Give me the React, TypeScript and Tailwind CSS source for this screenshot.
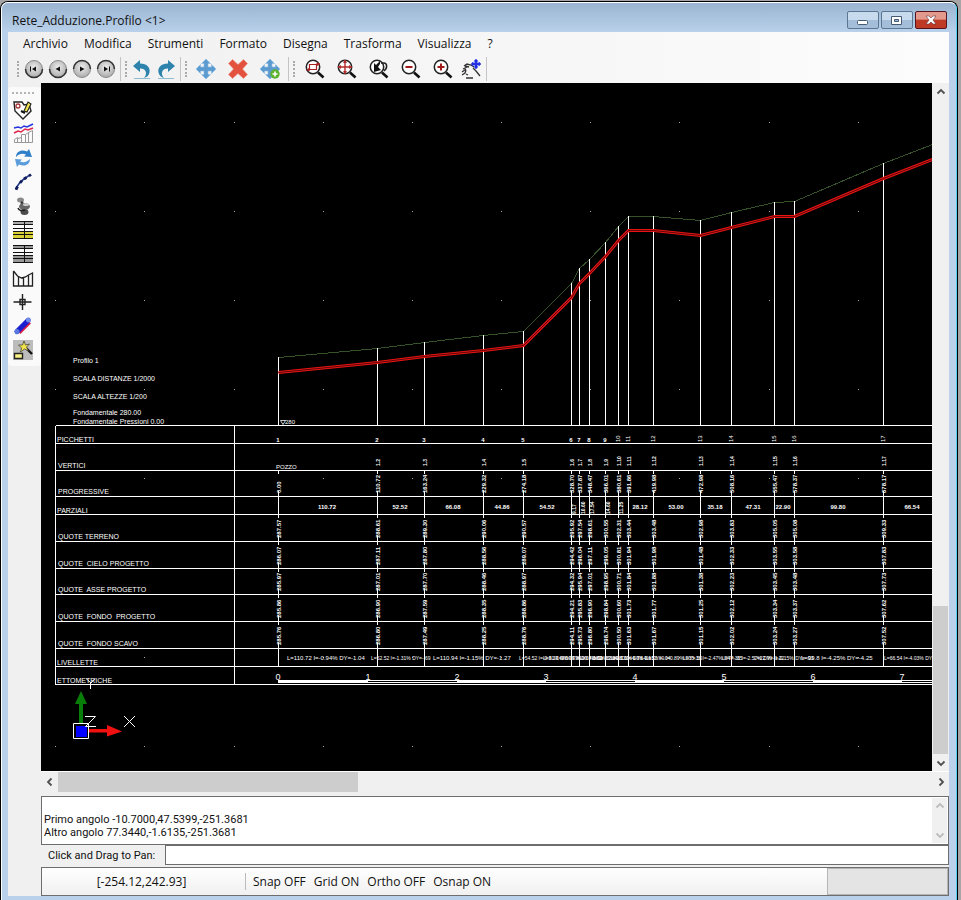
import type { ReactNode } from "react";

/* ---------- profile data ---------- */

type Station = {
  x: number;
  ground: number;
  pipe: number;
  prog: string;
  terreno: string;
  cielo: string;
  asse: string;
  fondo: string;
  scavo: string;
};

const raw: [number, number, number, string, string, string, string, string, string][] = [
  [278, 357, 372, "0.00", "287.57", "286.07", "285.97", "285.86", "285.76"],
  [377, 348, 362, "110.72", "288.61", "287.11", "287.01", "286.90", "286.80"],
  [424, 342, 356, "163.24", "289.30", "287.80", "287.70", "287.59", "287.49"],
  [483, 335, 350, "229.32", "290.06", "288.56", "288.46", "288.35", "288.25"],
  [523, 331, 345, "274.18", "290.57", "289.07", "288.97", "288.86", "288.76"],
  [571, 283, 297, "328.70", "295.92", "294.42", "294.32", "294.21", "294.11"],
  [579, 268, 283, "337.87", "297.54", "296.04", "295.94", "295.83", "295.73"],
  [589, 259, 273, "348.47", "298.61", "297.11", "297.01", "296.90", "296.80"],
  [605, 242, 256, "366.01", "300.55", "299.05", "298.95", "298.84", "298.74"],
  [618, 226, 240, "380.61", "302.31", "300.81", "300.71", "300.60", "300.50"],
  [628, 216, 230, "391.86", "303.44", "301.94", "301.84", "301.73", "301.63"],
  [653, 216, 230, "419.98", "303.48", "301.98", "301.88", "301.77", "301.67"],
  [700, 220, 235, "472.98", "302.98", "301.48", "301.38", "301.25", "301.15"],
  [731, 212, 227, "508.16", "303.83", "302.33", "302.23", "302.12", "302.02"],
  [774, 202, 216, "555.47", "305.05", "303.55", "303.45", "303.34", "303.24"],
  [794, 201, 216, "578.37", "305.08", "303.58", "303.48", "303.37", "303.27"],
  [883, 163, 178, "678.17", "309.33", "307.83", "307.73", "307.62", "307.52"],
];

const stations: Station[] = raw.map(([x, ground, pipe, prog, terreno, cielo, asse, fondo, scavo]) => ({
  x, ground, pipe, prog, terreno, cielo, asse, fondo, scavo,
}));

const bands = [
  { label: "PICCHETTI", x: 57, top: 425, bottom: 443 },
  { label: "VERTICI", x: 58, top: 443, bottom: 470 },
  { label: "PROGRESSIVE", x: 58, top: 470, bottom: 496 },
  { label: "PARZIALI", x: 57, top: 496, bottom: 514 },
  { label: "QUOTE TERRENO", x: 58, top: 514, bottom: 541 },
  { label: "QUOTE  CIELO PROGETTO", x: 58, top: 541, bottom: 568 },
  { label: "QUOTE  ASSE PROGETTO", x: 58, top: 568, bottom: 594 },
  { label: "QUOTE  FONDO  PROGETTO", x: 58, top: 594, bottom: 621 },
  { label: "QUOTE  FONDO SCAVO", x: 58, top: 621, bottom: 648 },
  { label: "LIVELLETTE", x: 57, top: 648, bottom: 666 },
  { label: "ETTOMETRICHE", x: 57, top: 666, bottom: 684 },
];

const valueBands: { key: keyof Station; top: number; bottom: number }[] = [
  { key: "prog", top: 470, bottom: 496 },
  { key: "terreno", top: 514, bottom: 541 },
  { key: "cielo", top: 541, bottom: 568 },
  { key: "asse", top: 568, bottom: 594 },
  { key: "fondo", top: 594, bottom: 621 },
  { key: "scavo", top: 621, bottom: 648 },
];

const partials: [number, string][] = [
  [327, "110.72"], [400, "52.52"], [453, "66.08"], [502, "44.86"], [547, "54.52"],
  [640, "28.12"], [676, "53.00"], [715, "35.18"], [753, "47.31"], [783, "22.90"],
  [838, "99.80"], [912, "66.54"],
];

const narrowPartials: [number, string][] = [
  [576, "9.17"], [585, "10.60"], [594, "17.54"], [610, "14.60"], [623, "11.25"],
];

const slopes: [number, number, string][] = [
  [287, 6, "L=110.72 I=-0.94% DY=-1.04"],
  [371, 5, "L=52.52 I=-1.31% DY=-.69"],
  [433, 6, "L=110.94 I=-1.15% DY=-1.27"],
  [519, 5, "L=54.52 I=-9.81% DY=-5.35"],
  [543, 5, "L=9.17 I=-17.7% DY=-1.62"],
  [556, 5, "L=28.14 I=-10.7% DY=-3.01"],
  [580, 5, "L=14.60 I=-12.1% DY=-1.76"],
  [592, 5, "L=11.25 I=-10.0% DY=-1.13"],
  [611, 5, "L=28.12 I=-0.14% DY=-.04"],
  [646, 5, "L=53.00 I=0.89% DY=.50"],
  [683, 5, "L=35.18 I=-2.47% DY=-.85"],
  [722, 5, "L=47.31 I=-2.57% DY=-1.22"],
  [754, 5, "L=22.90 I=-0.15% DY=-.03"],
  [801, 6, "L=99.8 I=-4.25% DY=-4.25"],
  [884, 5, "L=66.54 I=-4.03% DY=-2.68"],
];

const hectometres = [278, 368, 457, 546, 635, 724, 813, 902];
const gridX = [55, 144, 234, 323, 412, 501, 590, 679, 769, 858];
const gridY = [122, 211, 300, 389, 478, 568, 657, 746];

const notes: [number, string][] = [
  [363, "Profilo 1"],
  [381, "SCALA DISTANZE 1/2000"],
  [399, "SCALA ALTEZZE 1/200"],
  [415, "Fondamentale 280.00"],
  [424, "Fondamentale Pressioni 0.00"],
];

function Up({ x, y, size, bold, children }: { x: number; y: number; size: number; bold?: boolean; children: ReactNode }) {
  return (
    <text fontSize={size} fontWeight={bold ? "bold" : "normal"} transform={`translate(${x} ${y}) rotate(-90)`}>
      {children}
    </text>
  );
}

function Drawing() {
  const groundPts = [...stations.map((s) => `${s.x},${s.ground}`), "932,144", "1100,80"].join(" ");
  const pipePts = [...stations.map((s) => `${s.x},${s.pipe}`), "932,159", "1100,94"].join(" ");
  return (
    <svg role="img" aria-label="Profilo 1" className="min-w-0 flex-1 bg-black font-['Liberation_Sans',Arial,sans-serif]">
      <g transform="translate(-41 -83)" fill="#fff">
        {gridX.flatMap((x) => gridY.map((y) => <rect key={`${x}-${y}`} x={x} y={y} width="1" height="1" fill="#aaa" />))}

        <g fill="none">
          <polyline points={groundPts} stroke="#36522a" transform="translate(.5 .5)" shapeRendering="crispEdges" />
          <g stroke="#fff" transform="translate(.5 0)" shapeRendering="crispEdges">
            {stations.map((s) => <line key={s.x} x1={s.x} x2={s.x} y1={s.ground} y2="425" />)}
          </g>
          {/* pipe: two red walls around a dark core */}
          <polyline points={pipePts} stroke="#e81414" strokeWidth="3" transform="translate(.5 .5)" />
          <polyline points={pipePts} stroke="#5c0606" transform="translate(.5 .5)" />
        </g>

        {notes.map(([y, t]) => <text key={t} x="73" y={y} fontSize="7">{t}</text>)}
        <path d="M280.5 420.5h5l-2.5 4z" fill="none" stroke="#fff" strokeWidth=".8" />
        <text x="285" y="424" fontSize="6">280</text>

        <g stroke="#fff" shapeRendering="crispEdges" transform="translate(.5 .5)">
          {bands.map((b) => <line key={b.top} x1="55" x2="3000" y1={b.top} y2={b.top} />)}
          <line x1="55" x2="3000" y1="684" y2="684" />
          <line x1="55" x2="55" y1="425" y2="684" />
          <line x1="234" x2="234" y1="425" y2="684" />
          {stations.map((s) => (
            <g key={s.x}>
              <line x1={s.x} x2={s.x} y1="496" y2="514" />
              <line x1={s.x} x2={s.x} y1="648" y2="666" />
              {valueBands.map((b) => (
                <g key={b.key}>
                  <line x1={s.x} x2={s.x} y1={b.top} y2={b.top + 3} />
                  <line x1={s.x} x2={s.x} y1={b.bottom - 6} y2={b.bottom} />
                </g>
              ))}
            </g>
          ))}
        </g>

        {bands.map((b) => (
          <text key={b.label} x={b.x} y={b.bottom - (b.bottom - b.top > 20 ? 2 : 1)} fontSize="7" xmlSpace="preserve">{b.label}</text>
        ))}

        {stations.map((s, i) => (
          <g key={s.x}>
            {i < 9 ? (
              <text x={s.x} y="442" fontSize="6" fontWeight="bold" textAnchor="middle">{i + 1}</text>
            ) : (
              <Up x={s.x + 2} y={442} size={6}>{i + 1}</Up>
            )}
            {i > 0 && <Up x={s.x + 3} y={466} size={5} bold>{`1.${i + 1}`}</Up>}
            {valueBands.map((b) => (
              <Up key={b.key} x={s.x + 3} y={b.bottom - 3} size={6} bold>{s[b.key]}</Up>
            ))}
          </g>
        ))}
        <text x="276" y="469" fontSize="6">POZZO</text>

        {partials.map(([x, t]) => <text key={x} x={x} y="509" fontSize="6" fontWeight="bold" textAnchor="middle">{t}</text>)}
        {narrowPartials.map(([x, t]) => <Up key={x} x={x} y={514} size={5} bold>{t}</Up>)}
        {slopes.map(([x, size, t]) => <text key={x} x={x} y="660" fontSize={size}>{t}</text>)}

        {hectometres.map((x, i) => (
          <g key={x}>
            <text x={x} y="680" fontSize="9" textAnchor="middle">{i}</text>
            <g shapeRendering="crispEdges">
              <rect x={x} y="680" width="90" height="3" />
              {i % 2 === 1 && <rect x={x} y="681" width="89" height="1" fill="#000" />}
            </g>
          </g>
        ))}

        {/* UCS axes */}
        <path d="M79 723v-19h-4l6-13 6 13h-4v19z" fill="#087d08" />
        <path d="M88 729h19v-4l15 6.500-15 5v-4h-19z" fill="#f01010" />
        <rect x="76" y="726" width="11" height="11" fill="#00f" />
        <path d="M73.500 723.500h15v15h-15zM85 716.500h10.500l-10 10h10.500M124 716l11 11M135 716l-11 11M86 678.500l5 4.500 4-4.500M90.500 683v6" fill="none" stroke="#fff" />
      </g>
    </svg>
  );
}

/* ---------- icons ---------- */

function Icon({ children }: { children: ReactNode }) {
  return <svg width="22" height="22" viewBox="0 0 22 22" fill="none" aria-hidden="true">{children}</svg>;
}

function Round({ glyph, flip }: { glyph: string; flip?: boolean }) {
  return (
    <Icon>
      <defs>
        <radialGradient id="knob" cx=".5" cy=".4" r=".6">
          <stop offset="0" stopColor="#eee" />
          <stop offset="1" stopColor="#aaa" />
        </radialGradient>
      </defs>
      <circle cx="11" cy="11" r="8.500" fill="url(#knob)" stroke="#8a8a8a" />
      <path d={flip ? "M2.500 11a8.500 8.500 0 0 1 17 0" : "M2.500 11a8.500 8.500 0 0 0 17 0"} stroke="#333" strokeWidth="1.500" />
      <path d={glyph} fill="#111" />
    </Icon>
  );
}

function Lens({ children }: { children: ReactNode }) {
  return (
    <Icon>
      <circle cx="10" cy="9" r="6.700" fill="#fff" stroke="#222" strokeWidth="1.500" />
      <path d="M15 14.500l5.500 5" stroke="#111" strokeWidth="2.600" />
      {children}
    </Icon>
  );
}

const arrows4 = "M11 1l4.500 4.500H13v3.500h3.500V6.500L21 11l-4.500 4.500V13H13v3.500h2.500L11 21l-4.500-4.500H9V13H5.500v2.500L1 11l4.500-4.500V9H9V5.500H6.500z";

const Tools = {
  first: <Round glyph="M7 8.500h1v5H7zM13 8.500v5L9 11z" />,
  prev: <Round glyph="M13 8.500v5L8.500 11z" />,
  next: <Round flip glyph="M9 8.500v5l4.500-2.500z" />,
  last: <Round flip glyph="M9 8.500v5l4-2.500zM14 8.500h1v5h-1z" />,
  undo: (
    <Icon>
      <path d="M2 8L9 2v3.500c7 0 10.500 4 9.500 9-.5 3-3 5-5.500 5.500 3-3 3.500-9.500-4-9.500V14z" fill="#2e83ad" />
      <path d="M3 20.500h16" stroke="#8fbdd4" />
    </Icon>
  ),
  redo: (
    <Icon>
      <path d="M20 8L13 2v3.500c-7 0-10.500 4-9.500 9 .5 3 3 5 5.500 5.500-3-3-3.500-9.500 4-9.500V14z" fill="#2e83ad" />
      <path d="M3 20.500h16" stroke="#8fbdd4" />
    </Icon>
  ),
  move: <Icon><path d={arrows4} fill="#5b9bd0" stroke="#8dbce2" strokeWidth=".6" /></Icon>,
  remove: <Icon><path d="M1.500 5.500l4-4 5.500 5 5.500-5 4 4-5 5.500 5 5.500-4 4-5.500-5-5.500 5-4-4 5-5.500z" fill="#e2523e" stroke="#ef8c7c" strokeWidth=".6" /></Icon>,
  moveAdd: (
    <Icon>
      <path d={arrows4} fill="#5b9bd0" stroke="#8dbce2" strokeWidth=".6" />
      <circle cx="16" cy="16" r="4.700" fill="#5db32c" />
      <path d="M13.500 16h5M16 13.500v5" stroke="#fff" strokeWidth="1.600" />
    </Icon>
  ),
  zoomWindow: <Lens><path d="M6.500 6.500h7v5h-7zM3 12h4M13 6h4" stroke="#a22" strokeWidth="1.200" /><path d="M5 10l2.500 1.500L5 13.500zM14 4.500l3 1.500-3 2z" fill="#a22" /></Lens>,
  zoomExtents: <Lens><path d="M10 2v14M3 9h14" stroke="#b22a2a" strokeWidth="1.400" /><path d="M8 5l2-3 2 3zM8 13l2 3 2-3zM6 7L3 9l3 2zM14 7l3 2-3 2z" fill="#b22a2a" /></Lens>,
  zoomPrevious: <Lens><path d="M7 14V5l2 2 4-4v3l-2 3 3 3z" fill="#111" /><path d="M14 5h3c3 0 4 5 0 8" stroke="#222" strokeWidth="1.500" /></Lens>,
  zoomOut: <Lens><path d="M6.500 9h7" stroke="#a11a1a" strokeWidth="2" /></Lens>,
  zoomIn: <Lens><path d="M6.500 9h7M10 5.500v7" stroke="#a11a1a" strokeWidth="2" /></Lens>,
  pan: (
    <Icon>
      <path d="M4 8l3-2 4 1 3 2M3 11l4-2M2 14l4-3M2 17l3-2 1-3M5 8l4 1M6 20h7M13 10l3 3 4 5M6 16l2 1" stroke="#333" strokeWidth="1.300" />
      <path d="M16 1l2 2.300h-1v1.700h2V4l2 2-2 2V7h-2v1.700h1L16 11l-2-2.300h1V7h-2v1l-2-2 2-2v1h2V3.300h-1z" fill="#2230e6" stroke="#2230e6" strokeWidth=".5" />
    </Icon>
  ),
  edit: (
    <Icon>
      <path d="M2 3h8l2 3 5-1 2 7-8 8-8-8z" fill="#fff" stroke="#222" strokeWidth="1.400" />
      <circle cx="6" cy="7" r="2" stroke="#a33" strokeWidth="1.300" />
      <path d="M12 12l4-9 3 2-4 8z" fill="#f0e34a" stroke="#222" strokeWidth="1.100" />
      <path d="M9 12l4 2" stroke="#111" strokeWidth="2" />
    </Icon>
  ),
  chart: (
    <Icon>
      <path d="M2 5l4-1 3 1 3-2 3 1 6-3" stroke="#2335e0" strokeWidth="1.500" />
      <path d="M2 10l4-2 3 1 4-3 3 1 5-2" stroke="#e0254c" strokeWidth="1.500" />
      <path d="M2.500 19.500v-3l3-2v5M5.500 15.500l4-1v5M9.500 14.500v-3h4v8M13.500 11.500l3-2v10M16.500 9.500l4-2v12h-18" stroke="#999" />
    </Icon>
  ),
  refresh: (
    <Icon>
      <path d="M4 10c0-6 6-8 11-5.500L17 2l3 8-8-.5 2-2C10 6 7 7 4 10z" fill="#2f7fc9" />
      <path d="M18 12c0 6-6 8-11 5.500L5 20l-2-8 7 .5-2 2c4 1.500 7 .5 10-2.500z" fill="#5a9cdc" />
    </Icon>
  ),
  curve: <Icon><path d="M4 19c1-6 5-10 14-15" stroke="#223a8c" strokeWidth="1.500" /><path d="M4 18.500l1.500-3M8 12l2-2.500M12 8l2.500-1.500M17 5l2-1.500" stroke="#111d5a" strokeWidth="2.800" /></Icon>,
  valve: (
    <Icon>
      <ellipse cx="8.500" cy="5" rx="3.500" ry="2.500" fill="#8a8a8a" />
      <path d="M9 7l3 3" stroke="#333" strokeWidth="2.500" />
      <ellipse cx="12.500" cy="11.500" rx="5.500" ry="3.500" fill="#666" />
      <ellipse cx="14" cy="9.500" rx="3" ry="1.500" fill="#ccc" />
      <ellipse cx="12.500" cy="17" rx="4" ry="3" fill="#4c4c4c" />
      <path d="M6 13c1 3 4 3 7 2" stroke="#222" strokeWidth="1.500" />
    </Icon>
  ),
  tableYellow: <Icon><path d="M1 2h20v3H1z" fill="#aaa" /><path d="M1 12h20v7H1z" fill="#d6cf35" /><path d="M1 2.500h20M1 5.500h20M1 9.500h20M1 12.500h20M1 15.500h20M1 19.500h20M12.500 2v18" stroke="#111" /></Icon>,
  tableGrey: <Icon><path d="M1 2h20v3H1zM1 12h20v7H1z" fill="#999" /><path d="M1 2.500h20M1 5.500h20M1 9.500h20M1 12.500h20M1 15.500h20M1 19.500h20M12.500 2v18" stroke="#111" /></Icon>,
  sections: <Icon><path d="M1.500 4v15h19V6l-4 2-3 2-4 1-4-2-4-5M6.500 9v10M11.500 11v8M16.500 8v11" stroke="#222" strokeWidth="1.300" /></Icon>,
  target: <Icon><path d="M10.500 3v16M1.500 11h18M8 8.500h5v5H8z" stroke="#222" strokeWidth="1.400" /></Icon>,
  pipe: (
    <Icon>
      <path d="M7 17.500L17.500 7" stroke="#d31c4a" strokeWidth="4" />
      <path d="M5 16.500L16 5.500" stroke="#1a1fd0" strokeWidth="5" strokeLinecap="round" />
      <circle cx="5" cy="16.500" r="2.500" fill="#5878e0" />
      <circle cx="16.500" cy="5" r="2.500" fill="#6f8de8" />
    </Icon>
  ),
  wand: (
    <Icon>
      <path d="M1 1h20v20H1z" fill="#bcbcbc" />
      <path d="M2.500 14.500h8v5h-8z" fill="#f8f48a" stroke="#222" strokeWidth="1.400" />
      <path d="M14 9l6 6" stroke="#111" strokeWidth="2.400" />
      <path d="M12 2l1.500 4 4-1-3 3 2 4-4-2-4 3 1-4-3-3h4z" fill="#f2e54c" stroke="#333" strokeWidth=".7" />
    </Icon>
  ),
};

function Tool({ label, className = "w-8", children }: { label: string; className?: string; children: ReactNode }) {
  return (
    <button type="button" aria-label={label} className={`flex h-6 shrink-0 items-center justify-center ${className}`}>
      {children}
    </button>
  );
}

function ToolGroup({ children }: { children: ReactNode }) {
  return (
    <div className="flex items-center">
      <span className="mr-[3px] h-4 border-l-2 border-dotted border-[#aaa]" />
      {children}
      <span className="mr-1 ml-0.5 h-6 w-px bg-[#c4c4c4]" />
    </div>
  );
}

function Chevron({ dir, className = "text-[#505050]" }: { dir: "up" | "down" | "left" | "right"; className?: string }) {
  const d = { up: "M2.500 7.500L6 4l3.500 3.500", down: "M2.500 4.500L6 8l3.500-3.500", left: "M7.500 2.500L4 6l3.500 3.500", right: "M4.500 2.500L8 6l-3.500 3.500" }[dir];
  return (
    <svg width="12" height="12" viewBox="0 0 12 12" fill="none" stroke="currentColor" strokeWidth="1.800" className={className} aria-hidden="true">
      <path d={d} />
    </svg>
  );
}

const menus = ["Archivio", "Modifica", "Strumenti", "Formato", "Disegna", "Trasforma", "Visualizza", "?"];

export default function App() {
  return (
    <div className="flex min-h-screen flex-col bg-[#a7a5a5] pt-px pr-[3px] font-['Open_Sans','Noto_Sans',sans-serif] text-xs text-[#111]">
      <div className="flex flex-1 flex-col rounded-t-lg border-x border-t border-black bg-[#b9d1ea]">
        <div className="flex flex-1 flex-col rounded-t-[7px] border-x border-t border-l-white border-t-white border-r-[#4fd3f0] pr-[7px] pb-1 pl-1.5">
          <header className="-mr-[7px] -ml-1.5 flex h-[29px] items-center justify-between rounded-t-md bg-linear-to-b from-[#9ab4d1] to-[#b9d1ea] pr-[9px] pl-2.5">
            <h1 className="pt-1.5">Rete_Adduzione.Profilo &lt;1&gt;</h1>
            <div className="flex gap-0.5 pt-[5px]">
              <button type="button" aria-label="Riduci a icona" className="flex h-[18px] w-8 items-center justify-center rounded-xs border border-[#5b7593] bg-linear-to-b from-[#c8daed] from-50% to-[#a4bdd8] to-50%">
                <svg width="12" height="12" fill="#fff" stroke="#465a72"><rect x=".5" y="6.500" width="10" height="4" rx="1" /></svg>
              </button>
              <button type="button" aria-label="Ingrandisci" className="flex h-[18px] w-8 items-center justify-center rounded-xs border border-[#5b7593] bg-linear-to-b from-[#c8daed] from-50% to-[#a4bdd8] to-50%">
                <svg width="12" height="12" fill="#fff" stroke="#465a72"><path d="M.5 2.500h10v8h-10z" /><path d="M3.500 5.500h4v2h-4z" fill="#9ab4d1" /></svg>
              </button>
              <button type="button" aria-label="Chiudi" className="flex h-[18px] w-8 items-center justify-center rounded-xs border border-[#571420] bg-linear-to-b from-[#e39a8c] from-45% to-[#bf3a25] to-50%">
                <svg width="14" height="12" viewBox="0 0 14 12"><path d="M2 2h3l2 2 2-2h3L9 6l3 4H9L7 8l-2 2H2l3-4z" fill="#fff" stroke="#5c3540" strokeWidth=".6" /></svg>
              </button>
            </div>
          </header>

          <div className="bg-linear-to-r from-[#f0f0f0] to-[#fcfcfc]">
            <nav className="flex h-6 items-center gap-4 pl-[15px]">
              {menus.map((m) => <button key={m} type="button">{m}</button>)}
            </nav>
            <div className="flex h-[27px] items-center pb-0.5 pl-[9px]">
              <ToolGroup>
                <Tool label="Primo" className="w-6">{Tools.first}</Tool>
                <Tool label="Precedente" className="w-6">{Tools.prev}</Tool>
                <Tool label="Successivo" className="w-6">{Tools.next}</Tool>
                <Tool label="Ultimo" className="w-6">{Tools.last}</Tool>
              </ToolGroup>
              <ToolGroup>
                <Tool label="Annulla" className="w-6">{Tools.undo}</Tool>
                <Tool label="Ripeti" className="w-6">{Tools.redo}</Tool>
              </ToolGroup>
              <ToolGroup>
                <Tool label="Sposta">{Tools.move}</Tool>
                <Tool label="Elimina">{Tools.remove}</Tool>
                <Tool label="Aggiungi">{Tools.moveAdd}</Tool>
              </ToolGroup>
              <ToolGroup>
                <Tool label="Zoom finestra">{Tools.zoomWindow}</Tool>
                <Tool label="Zoom estensioni">{Tools.zoomExtents}</Tool>
                <Tool label="Zoom precedente">{Tools.zoomPrevious}</Tool>
                <Tool label="Zoom indietro">{Tools.zoomOut}</Tool>
                <Tool label="Zoom avanti">{Tools.zoomIn}</Tool>
                <Tool label="Pan" className="w-[26px]">{Tools.pan}</Tool>
              </ToolGroup>
            </div>
          </div>

          <div className="flex flex-1 bg-[#f0f0f0]">
            <aside className="flex w-[33px] shrink-0 flex-col">
              <div className="mt-1 flex flex-col items-center rounded-sm bg-[#fafafa] pt-[5px] pr-1 pb-1">
                <span className="mb-1 w-[22px] border-t-2 border-dotted border-[#b5b5b5]" />
                <Tool label="Modifica profilo">{Tools.edit}</Tool>
                <Tool label="Profili">{Tools.chart}</Tool>
                <Tool label="Aggiorna">{Tools.refresh}</Tool>
                <Tool label="Curva">{Tools.curve}</Tool>
                <Tool label="Valvola">{Tools.valve}</Tool>
                <Tool label="Tabella evidenziata">{Tools.tableYellow}</Tool>
                <Tool label="Tabella">{Tools.tableGrey}</Tool>
                <Tool label="Sezioni">{Tools.sections}</Tool>
                <Tool label="Punto">{Tools.target}</Tool>
                <Tool label="Tubazione">{Tools.pipe}</Tool>
                <Tool label="Opzioni">{Tools.wand}</Tool>
              </div>
            </aside>

            <main className="flex min-w-0 flex-1 flex-col">
              <div className="flex flex-1">
                <Drawing />
                <div className="flex w-[17px] shrink-0 flex-col items-center">
                  <button type="button" aria-label="Scorri su" className="flex h-[17px] items-center"><Chevron dir="up" /></button>
                  <div className="flex-1" />
                  <div className="h-[148px] w-[15px] bg-[#cdcdcd]" />
                  <button type="button" aria-label="Scorri giù" className="flex h-[17px] items-center"><Chevron dir="down" /></button>
                </div>
              </div>
              <div className="flex h-[25px] items-start border-t border-white">
                <button type="button" aria-label="Scorri a sinistra" className="flex h-5 w-[17px] items-center justify-center"><Chevron dir="left" /></button>
                <div className="h-5 w-[33%] bg-[#cdcdcd]" />
                <div className="flex-1" />
                <button type="button" aria-label="Scorri a destra" className="flex h-5 w-[17px] items-center justify-center"><Chevron dir="right" /></button>
              </div>

              <div className="flex h-[49px] border border-[#6e6e6e] bg-white p-px">
                <textarea
                  readOnly
                  aria-label="Cronologia comandi"
                  rows={3}
                  className="h-[45px] flex-1 resize-none overflow-hidden pt-0.5 pl-px font-[Roboto,'Liberation_Sans',sans-serif] text-[11px] leading-[13px] outline-none"
                  defaultValue={"\nPrimo angolo -10.7000,47.5399,-251.3681\nAltro angolo 77.3440,-1.6135,-251.3681"}
                />
                <div className="flex w-[15px] flex-col items-center justify-between bg-[#f0f0f0] py-0.5">
                  <Chevron dir="up" className="text-[#bcbcbc]" />
                  <Chevron dir="down" className="text-[#bcbcbc]" />
                </div>
              </div>
              <div className="flex h-5 items-stretch">
                <label htmlFor="command" className="flex w-[124px] items-center pt-0.5 pl-[7px] font-[Roboto,'Liberation_Sans',sans-serif] text-[11px]">Click and Drag to Pan:</label>
                <input id="command" type="text" className="min-w-0 flex-1 border border-[#6e6e6e] bg-white px-1 outline-none" />
              </div>
              <footer className="mt-0.5 flex h-[29px] items-stretch border border-[#6e6e6e] bg-linear-to-b from-white to-[#f0f0f0]">
                <div className="flex w-[203px] items-center justify-center pr-1">[-254.12,242.93]</div>
                <div className="my-[5px] flex items-center gap-2 border-l border-[#bbb] pl-[7px]">
                  <button type="button">Snap OFF</button>
                  <button type="button">Grid ON</button>
                  <button type="button">Ortho OFF</button>
                  <button type="button">Osnap ON</button>
                </div>
                <div className="ml-auto w-[121px] border border-[#b5b5b5] bg-[#e4e4e4]" />
              </footer>
            </main>
          </div>
        </div>
      </div>
    </div>
  );
}
